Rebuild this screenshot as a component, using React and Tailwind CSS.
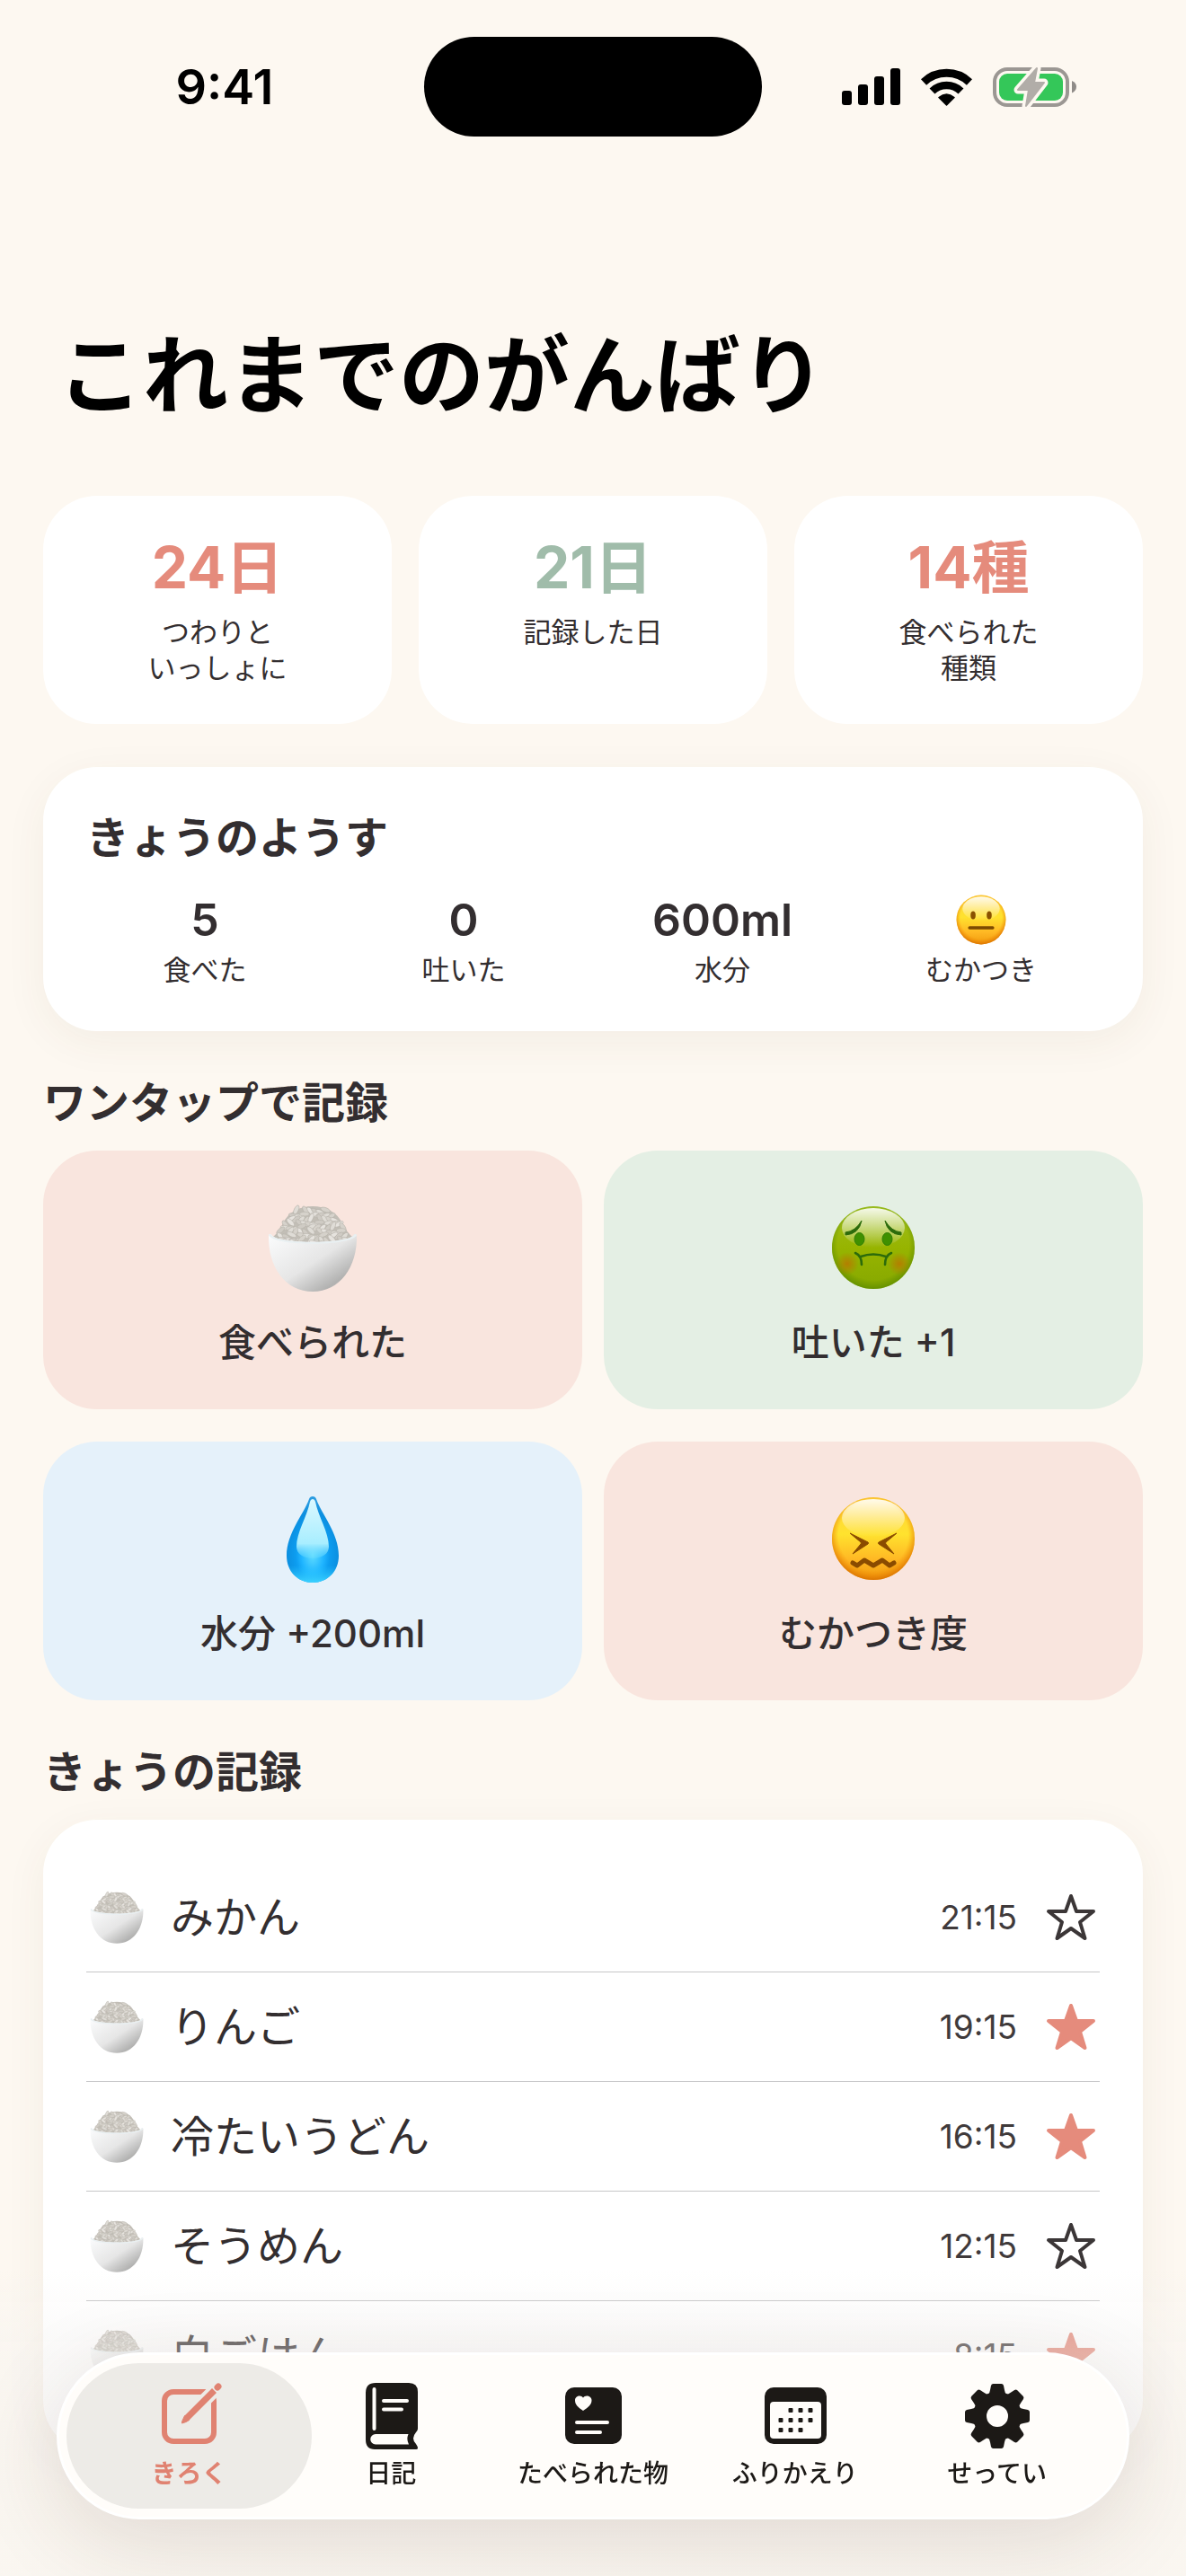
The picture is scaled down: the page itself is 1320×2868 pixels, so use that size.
import React, {useState} from "react";

const summary = [
    {value: "24日", lines: ["つわりと", "いっしょに"], color: "text-[#e58b7c]"},
    {value: "21日", lines: ["記録した日"], color: "text-[#a0bcaa]"},
    {value: "14種", lines: ["食べられた", "種類"], color: "text-[#e58b7c]"},
];

const foods = [
    {name: "みかん", time: "21:15", starred: false},
    {name: "りんご", time: "19:15", starred: true},
    {name: "冷たいうどん", time: "16:15", starred: true},
    {name: "そうめん", time: "12:15", starred: false},
    {name: "白ごはん", time: "8:15", starred: true},
];

// Rice grains, stacked from the back of the mound to the rim of the bowl
const grains = [];
for (let row = 0; row < 9; row++) {
    const y = 7 + row * 4.6;
    const half = 36 * Math.sqrt(1 - Math.pow((44 - y) / 44, 2)) + row * 0.6;
    const count = Math.max(4, Math.round(half / 3.4));
    for (let i = 0; i < count; i++) {
        const n = row * 31 + i * 17;
        grains.push({
            x: 50 - half + (2 * half * (i + 0.5)) / count + ((n * 7) % 5) - 2,
            y: y + ((n * 3) % 5) * 0.7,
            r: ((n * 53) % 130) - 65,
            fill: ["#dfdcd6", "#d6d2cb", "#e6e3de", "#cfcbc4"][n % 4],
        });
    }
}

// Gradients shared by every drawn emoji
const Gradients = () => (
    <svg className="absolute size-0" aria-hidden>
        <defs>
            <linearGradient id="bowl" x1="0" y1="0" x2="1" y2="1">
                <stop offset="0" stopColor="#fbfcfd"/>
                <stop offset="0.5" stopColor="#e6e6e6"/>
                <stop offset="0.8" stopColor="#b2b2b1"/>
                <stop offset="1" stopColor="#d0d0d0"/>
            </linearGradient>
            <linearGradient id="yellow" x1="0" y1="0" x2="0" y2="1">
                <stop offset="0" stopColor="#ffd43c"/>
                <stop offset="0.45" stopColor="#ffe22e"/>
                <stop offset="0.75" stopColor="#ffb824"/>
                <stop offset="1" stopColor="#f09a0c"/>
            </linearGradient>
            <radialGradient id="yellowRim" cx="0.5" cy="0.46" r="0.54">
                <stop offset="0.78" stopColor="#f58a00" stopOpacity="0"/>
                <stop offset="1" stopColor="#d86f00" stopOpacity="0.85"/>
            </radialGradient>
            <linearGradient id="green" x1="0" y1="0" x2="0" y2="1">
                <stop offset="0" stopColor="#9fc020"/>
                <stop offset="0.5" stopColor="#97b400"/>
                <stop offset="1" stopColor="#86a800"/>
            </linearGradient>
            <radialGradient id="greenRim" cx="0.5" cy="0.46" r="0.54">
                <stop offset="0.8" stopColor="#5f8c00" stopOpacity="0"/>
                <stop offset="1" stopColor="#5a8a00" stopOpacity="0.75"/>
            </radialGradient>
            <linearGradient id="shine" x1="0" y1="0" x2="0" y2="1">
                <stop offset="0" stopColor="#fff" stopOpacity="0.9"/>
                <stop offset="1" stopColor="#fff" stopOpacity="0"/>
            </linearGradient>
            <radialGradient id="blush">
                <stop offset="0" stopColor="#b87900" stopOpacity="0.9"/>
                <stop offset="1" stopColor="#b87900" stopOpacity="0"/>
            </radialGradient>
            <radialGradient id="drop" cx="0.5" cy="0.68" r="0.62">
                <stop offset="0" stopColor="#5fdcff"/>
                <stop offset="0.35" stopColor="#1fb4ff"/>
                <stop offset="0.52" stopColor="#0d9df0"/>
                <stop offset="0.8" stopColor="#0b8fe0"/>
                <stop offset="1" stopColor="#2a9be0"/>
            </radialGradient>
            <linearGradient id="dropBase" x1="0" y1="0" x2="0" y2="1">
                <stop offset="0.8" stopColor="#28c8ff" stopOpacity="0"/>
                <stop offset="1" stopColor="#3cd2ff"/>
            </linearGradient>
            <linearGradient id="dropShine" x1="0" y1="0" x2="0" y2="1">
                <stop offset="0" stopColor="#dcf8ff"/>
                <stop offset="0.75" stopColor="#a8eeff"/>
                <stop offset="1" stopColor="#6fdfff" stopOpacity="0.3"/>
            </linearGradient>
        </defs>
    </svg>
);

const Rice = ({className}) => (
    <svg viewBox="0 0 100 100" className={className} aria-hidden>
        <path d="M5 38C12 32 14 28 17 22 23 9 36 3 50 3s27 6 33 19c3 7 7 11 12 16-8 8-80 8-90 0z" fill="#c2beb6"/>
        {grains.map((g, i) => (
            <ellipse
                key={i}
                cx={g.x}
                cy={g.y}
                rx="5.500"
                ry="2.400"
                fill={g.fill}
                stroke="#b7b3ab"
                strokeWidth="0.600"
                transform={`rotate(${g.r} ${g.x} ${g.y})`}
            />
        ))}
        <path d="M1 35C2 33 4 34 5 36c10 9 80 9 90 0 1-2 3-3 4-1 1 36-19 63-49 63S0 71 1 35z" fill="url(#bowl)"/>
        <path d="M1 35C2 33 4 34 5 36c10 9 80 9 90 0 1-2 3-3 4-1-5 13-93 13-98 0z" fill="#e9f0f2"/>
    </svg>
);

const NeutralFace = ({className}) => (
    <svg viewBox="0 0 100 100" className={className} role="img" aria-label="ふつう">
        <circle cx="50" cy="50" r="49" fill="url(#yellow)"/>
        <circle cx="50" cy="50" r="49" fill="url(#yellowRim)"/>
        <ellipse cx="50" cy="28" rx="37" ry="24" fill="url(#shine)"/>
        <ellipse cx="34" cy="41" rx="5" ry="8" fill="#8a5200"/>
        <ellipse cx="66" cy="41" rx="5" ry="8" fill="#8a5200"/>
        <rect x="24" y="63" width="52" height="6" rx="3" fill="#7c4a00"/>
    </svg>
);

const SickFace = ({className}) => (
    <svg viewBox="0 0 100 100" className={className} aria-hidden>
        <circle cx="50" cy="49" r="46" fill="url(#green)"/>
        <circle cx="50" cy="49" r="46" fill="url(#greenRim)"/>
        <ellipse cx="50" cy="27" rx="35" ry="22" fill="url(#shine)"/>
        <circle cx="21" cy="67" r="13" fill="url(#blush)"/>
        <circle cx="79" cy="67" r="13" fill="url(#blush)"/>
        <ellipse cx="34.500" cy="39.500" rx="5.500" ry="7" fill="#3f9000" stroke="#2f7d05" strokeWidth="1"/>
        <ellipse cx="65.500" cy="39.500" rx="5.500" ry="7" fill="#3f9000" stroke="#2f7d05" strokeWidth="1"/>
        <path d="M19 32Q30 31 37 19 34 34 19 35z" fill="#2c6b0b" stroke="#2c6b0b" strokeWidth="1" strokeLinejoin="round"/>
        <path d="M81 32Q70 31 63 19 66 34 81 35z" fill="#2c6b0b" stroke="#2c6b0b" strokeWidth="1" strokeLinejoin="round"/>
        <path d="M36 59Q50 54 64 59M30 55Q37 58 37 68M70 55Q63 58 63 68" fill="none" stroke="#2c6b0b" strokeWidth="2.600" strokeLinecap="round"/>
    </svg>
);

const WaterDrop = ({className}) => (
    <svg viewBox="0 0 100 100" className={className} aria-hidden>
        <path d="M46 5c1-4 7-4 8 0 6 17 25 38 25 63 0 18-13 30-29 30S21 86 21 68C21 43 40 22 46 5z" fill="url(#drop)"/>
        <path d="M46 5c1-4 7-4 8 0 6 17 25 38 25 63 0 18-13 30-29 30S21 86 21 68C21 43 40 22 46 5z" fill="url(#dropBase)"/>
        <path d="M47 8c1-4 5-4 6 0 3 16 15 34 15 50 0 8-8 13-18 13s-18-5-18-13c0-16 12-34 15-50z" fill="url(#dropShine)"/>
    </svg>
);

const ConfoundedFace = ({className}) => (
    <svg viewBox="0 0 100 100" className={className} aria-hidden>
        <circle cx="50" cy="49" r="46" fill="url(#yellow)"/>
        <circle cx="50" cy="49" r="46" fill="url(#yellowRim)"/>
        <ellipse cx="50" cy="26" rx="35" ry="21" fill="url(#shine)"/>
        <g fill="#8a4b00" stroke="#8a4b00" strokeWidth="1" strokeLinejoin="round">
            <path d="M24 43L44 53Q45 54 44 55L27 66 36 55Q37 54 36 53z"/>
            <path d="M76 43L56 53Q55 54 56 55L73 66 64 55Q63 54 64 53z"/>
        </g>
        <path d="M27 76l5 3 8-6 10 6 10-6 8 6 5-3" fill="none" stroke="#8a4b00" strokeWidth="5" strokeLinejoin="round" strokeLinecap="round"/>
    </svg>
);

const Star = ({filled}) => (
    <svg viewBox="0 0 56 56" className="size-14" aria-hidden>
        <path
            d="M28 4L34 21H53L38 33 43.500 51 28 40 12.500 51 18 33 3 21H22z"
            fill={filled ? "#e58b7c" : "none"}
            stroke={filled ? "#e58b7c" : "#3b3637"}
            strokeWidth="4"
            strokeLinejoin="round"
        />
    </svg>
);

const ComposeIcon = () => (
    <svg viewBox="0 0 76 76" className="size-[76px]" fill="none" stroke="currentColor" aria-hidden>
        <mask id="pencilGap" maskUnits="userSpaceOnUse" x="0" y="0" width="76" height="76">
            <rect width="76" height="76" fill="#fff" stroke="none"/>
            <path d="M80 -4L44 32" stroke="#000" strokeWidth="15"/>
        </mask>
        <rect x="11" y="11" width="55" height="55" rx="10" strokeWidth="6" mask="url(#pencilGap)"/>
        <path d="M66.500 9.500L36 40" strokeWidth="7"/>
        <path d="M33.500 37.500L38.500 42.500 35 44.500 30.500 46Q30 45.500 31 43z" fill="currentColor" strokeWidth="1" strokeLinejoin="round"/>
        <path d="M70 6L71 5" strokeWidth="7" strokeLinecap="round"/>
    </svg>
);

const BookIcon = () => (
    <svg viewBox="0 0 76 76" className="size-[76px]" aria-hidden>
        <path
            d="M21 1H58Q68 1 68 11V52Q68 54 66 56 60 63 66 69 70 75 66 75H20Q10 75 10 64V12Q10 1 21 1z"
            fill="currentColor"
        />
        <path d="M21 58H57.500Q55 64 58 69.500H21A5.700 5.700 0 0 1 21 58z" fill="#fffdfa"/>
        <path d="M19.500 8V52M30 21H56M30 30.500H50" stroke="#fffdfa" strokeWidth="4" strokeLinecap="round"/>
    </svg>
);

const FoodCardIcon = () => (
    <svg viewBox="0 0 76 76" className="size-[76px]" aria-hidden>
        <rect x="7" y="6" width="63" height="63" rx="10" fill="currentColor"/>
        <path d="M27 32C21 28 18 25 18 20.500 18 15 25 14 27 17.500 29 14 36.500 15 36.500 20.500 36.500 25 33 28 27 32z" fill="#fffdfa"/>
        <path d="M20 45H54M20 56H46" stroke="#fffdfa" strokeWidth="4" strokeLinecap="round"/>
    </svg>
);

const CalendarIcon = () => (
    <svg viewBox="0 0 76 76" className="size-[76px]" aria-hidden>
        <rect x="4" y="6" width="69" height="63" rx="10" fill="currentColor"/>
        <rect x="10" y="22" width="57" height="41" rx="4" fill="#fffdfa"/>
        <g fill="currentColor">
            {[[33, 31], [44, 31], [55, 31], [22, 42], [33, 42], [44, 42], [55, 42], [22, 53], [33, 53], [44, 53]].map(([x, y]) => (
                <rect key={`${x}-${y}`} x={x - 2.5} y={y - 2} width="5" height="5" rx="1"/>
            ))}
        </g>
    </svg>
);

const GearIcon = () => (
    <svg viewBox="0 0 76 76" className="size-[76px]" aria-hidden>
        <g transform="translate(38 38)" fill="currentColor">
            <circle r="19.500" fill="none" stroke="currentColor" strokeWidth="15"/>
            {[0, 45, 90, 135, 180, 225, 270, 315].map((a) => (
                <path key={a} d="M-10 -24Q-8.500 -26 -8 -29L-7 -34Q-6.500 -36 -4.500 -36H4.500Q6.500 -36 7 -34L8 -29Q8.500 -26 10 -24z" transform={`rotate(${a})`}/>
            ))}
        </g>
    </svg>
);

const actions = [
    {label: "食べられた", Icon: Rice, bg: "bg-[#f9e5de]"},
    {label: "吐いた +1", Icon: SickFace, bg: "bg-[#e4efe4]"},
    {label: "水分 +200ml", Icon: WaterDrop, bg: "bg-[#e5f1fa]"},
    {label: "むかつき度", Icon: ConfoundedFace, bg: "bg-[#f9e5de]"},
];

const tabs = [
    {label: "きろく", Icon: ComposeIcon},
    {label: "日記", Icon: BookIcon},
    {label: "たべられた物", Icon: FoodCardIcon},
    {label: "ふりかえり", Icon: CalendarIcon},
    {label: "せってい", Icon: GearIcon},
];

const StatusBar = () => (
    <div className="grid grid-cols-[1fr_376px_1fr] items-center pt-[41px] text-black">
        <div className="pl-7 text-center text-[54px] leading-[60px] font-semibold">9:41</div>
        <div className="h-[111px] rounded-full bg-black"/>
        <div className="flex items-center justify-center gap-[23px] pr-8">
            <svg viewBox="0 0 65 42" className="h-[42px] w-[65px]" fill="currentColor" aria-hidden>
                <rect x="0" y="25" width="11" height="16" rx="3"/>
                <rect x="18" y="18" width="11" height="23" rx="3"/>
                <rect x="36" y="9" width="11" height="32" rx="3"/>
                <rect x="54" y="0" width="11" height="41" rx="3"/>
            </svg>
            <svg viewBox="0 0 57 42" className="h-[42px] w-[57px]" fill="none" stroke="currentColor" aria-hidden>
                <path d="M3 15.500A37 37 0 0 1 54 15.500" strokeWidth="9"/>
                <path d="M12.500 25.500A23 23 0 0 1 44.500 25.500" strokeWidth="8.500"/>
                <path d="M28.500 41L20 32.500Q28.500 25.500 37 32.500z" fill="currentColor" strokeWidth="1.500" strokeLinejoin="round"/>
            </svg>
            <svg viewBox="0 0 94 46" className="h-[46px] w-[94px]" aria-hidden>
                <rect x="2" y="3" width="81" height="40" rx="14" fill="none" stroke="#9b9793" strokeWidth="4"/>
                <rect x="7" y="8" width="71" height="30" rx="9" fill="#34c759"/>
                <path d="M88 16Q93 18 93 22.500T88 29.500z" fill="#8f8b88"/>
                <path d="M49 2L46 18H57L37 44 40 26H28z" fill="#b1ada8" stroke="#fdf8f1" strokeWidth="9" strokeLinejoin="round"/>
                <path d="M49 2L46 18H57L37 44 40 26H28z" fill="#b1ada8" stroke="#b1ada8" strokeWidth="2" strokeLinejoin="round"/>
            </svg>
        </div>
    </div>
);

const App = () => {
    const [stars, setStars] = useState(foods.map((f) => f.starred));
    const [tab, setTab] = useState(0);

    const toggleStar = (i) => setStars(stars.map((s, n) => (n === i ? !s : s)));

    return (
        <div className="relative min-h-screen overflow-hidden bg-[#fdf8f1] font-['Inter','Noto_Sans_CJK_JP',sans-serif] text-[#332e30]">
            <Gradients/>
            <StatusBar/>

            <main className="px-12 pb-[137px]">
                <h1 className="mt-[207px] px-4 text-[95px] leading-[120px] font-bold text-black">これまでのがんばり</h1>

                <section className="mt-[73px] grid grid-cols-3 gap-[30px]">
                    {summary.map((s) => (
                        <div key={s.value} className="rounded-[60px] bg-white px-6 pt-11 pb-[42px] text-center">
                            <div className={`text-[64px] leading-[72px] font-bold ${s.color}`}>{s.value}</div>
                            <div className="mt-4 text-[31px] leading-[40px]">
                                {s.lines.map((l) => <div key={l}>{l}</div>)}
                            </div>
                        </div>
                    ))}
                </section>

                <section className="mt-12 rounded-[60px] bg-white p-12 shadow-[0_12px_48px_rgba(90,60,40,0.06)]">
                    <h2 className="text-[48px] leading-[62px] font-bold">きょうのようす</h2>
                    <dl className="mt-7 grid grid-cols-4 gap-6 text-center">
                        {[["食べた", "5"], ["吐いた", "0"], ["水分", "600ml"], ["むかつき", null]].map(([label, value]) => (
                            <div key={label} className="flex flex-col-reverse items-center gap-1">
                                <dt className="text-[31px] leading-[40px]">{label}</dt>
                                <dd className="flex h-16 items-center text-[50px] leading-[60px] font-semibold">
                                    {value ?? <NeutralFace className="size-14"/>}
                                </dd>
                            </div>
                        ))}
                    </dl>
                </section>

                <h2 className="mt-[50px] text-[48px] leading-[60px] font-bold">ワンタップで記録</h2>
                <section className="mt-[23px] grid grid-cols-2 gap-x-6 gap-y-9">
                    {actions.map(({label, Icon, bg}) => (
                        <button key={label} type="button" className={`flex flex-col items-center rounded-[60px] pt-[59px] pb-11 ${bg}`}>
                            <Icon className="size-[100px]"/>
                            <span className="mt-[25px] text-[42px] leading-[60px] font-medium">{label}</span>
                        </button>
                    ))}
                </section>

                <h2 className="mt-[50px] text-[48px] leading-[60px] font-bold">きょうの記録</h2>
                <ul className="mt-[23px] rounded-[60px] bg-white p-12 shadow-[0_12px_48px_rgba(90,60,40,0.06)]">
                    {foods.map((f, i) => (
                        <li key={f.name} className="flex h-[122px] items-center border-b border-[#c6c6c8] pr-1 pl-1 last:border-b-0">
                            <Rice className="size-[60px]"/>
                            <span className="ml-[30px] flex-1 text-[48px] leading-[60px]">{f.name}</span>
                            <time className="text-[37px] leading-[48px] text-[#3f3a3b]">{f.time}</time>
                            <button type="button" aria-label="お気に入り" aria-pressed={stars[i]} className="ml-8" onClick={() => toggleStar(i)}>
                                <Star filled={stars[i]}/>
                            </button>
                        </li>
                    ))}
                </ul>
            </main>

            {/* Scroll-edge fade behind the floating tab bar */}
            <div className="pointer-events-none fixed inset-x-0 bottom-0 h-[348px] bg-linear-to-b from-[#f5f3f1]/0 via-[#f5f3f1]/40 via-30% to-[#f5f3f1]/40"/>

            <nav className="fixed inset-x-[63px] bottom-[63px] flex h-[186px] rounded-full border-3 border-white bg-[#fffdfa] px-8 shadow-[0_24px_100px_rgba(70,40,30,0.14)]">
                {tabs.map(({label, Icon}, i) => (
                    <button
                        key={label}
                        type="button"
                        aria-current={i === tab ? "page" : undefined}
                        onClick={() => setTab(i)}
                        className={`relative flex flex-1 basis-0 flex-col items-center justify-center gap-2 ${i === tab ? "font-bold text-[#e08271]" : "font-medium text-[#1c1916]"}`}
                    >
                        {i === tab && <span className="absolute -inset-x-6 inset-y-[9px] rounded-full bg-[#edebe7]"/>}
                        <span className="relative"><Icon/></span>
                        <span className="relative text-[28px] leading-[36px] whitespace-nowrap">{label}</span>
                    </button>
                ))}
            </nav>
        </div>
    );
};

export default App;
